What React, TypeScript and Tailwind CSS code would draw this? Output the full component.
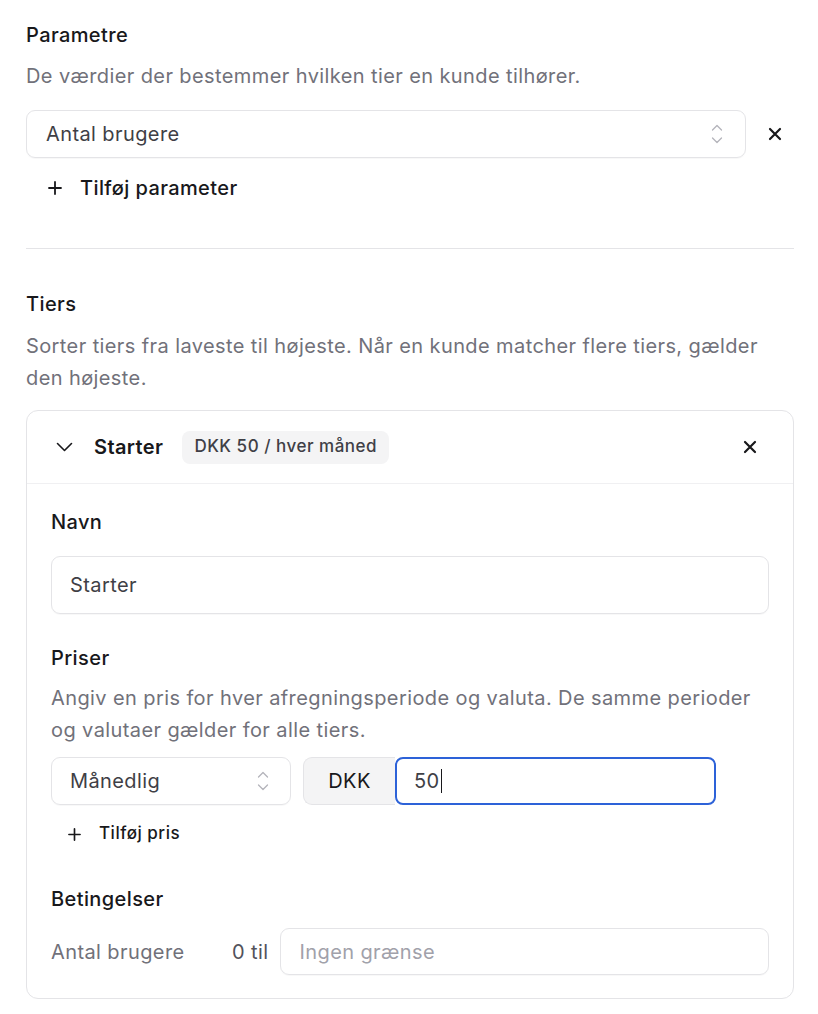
import React from "react";

function XIcon() {
  return (
    <svg width="14" height="14" viewBox="0 0 14 14" fill="none" stroke="#18181b" strokeWidth="2.2" strokeLinecap="round">
      <path d="M2 2L12 12M12 2L2 12" />
    </svg>
  );
}

function UpDown() {
  return (
    <svg width="14" height="22" viewBox="0 0 14 22" fill="none" stroke="#b4b4bb" strokeWidth="1.3" strokeLinecap="round" strokeLinejoin="round">
      <path d="M2.5 7L7 2.5L11.5 7" />
      <path d="M2.5 15L7 19.5L11.5 15" />
    </svg>
  );
}

function Plus({ size = 14 }: { size?: number }) {
  return (
    <svg width={size} height={size} viewBox="0 0 14 14" fill="none" stroke="#18181b" strokeWidth="1.8" strokeLinecap="round">
      <path d="M7 1V13M1 7H13" />
    </svg>
  );
}

function ChevronDown() {
  return (
    <svg width="17" height="10" viewBox="0 0 17 10" fill="none" stroke="#18181b" strokeWidth="1.6" strokeLinecap="round" strokeLinejoin="round">
      <path d="M1.5 1.5L8.5 8.5L15.5 1.5" />
    </svg>
  );
}

export default function App() {
  return (
    <div
      className="w-[818px] min-h-[1014px] bg-white px-[26px] pt-[21px] text-[20px] tracking-[0.02em] text-[#18181b]"
      style={{ fontFamily: "Inter, 'Noto Sans', sans-serif" }}
    >
      <div className="w-[768px]">
        <div className="font-medium leading-7">Parametre</div>
        <div className="mt-[13px] leading-7 text-[#71717a]">De værdier der bestemmer hvilken tier en kunde tilhører.</div>
        <div className="mt-[20px] flex items-center">
          <div className="flex h-12 w-[720px] items-center justify-between rounded-[9px] border border-[#e4e4e7] pl-[19px] pr-[21px] shadow-[0_1px_1px_rgba(0,0,0,0.03)]">
            <span className="text-[#3f3f46]">Antal brugere</span>
            <UpDown />
          </div>
          <div className="ml-[22px] flex h-12 items-center">
            <XIcon />
          </div>
        </div>
        <div className="mt-[10px] flex h-10 items-center gap-[18px] pl-[22px]">
          <Plus />
          <span className="font-medium">Tilføj parameter</span>
        </div>
        <div className="mt-[40px] h-px bg-[#e4e4e7]" />

        <div className="mt-[41px] font-medium leading-7">Tiers</div>
        <div className="mt-[12px] leading-8 text-[#71717a]">
          Sorter tiers fra laveste til højeste. Når en kunde matcher flere tiers, gælder den højeste.
        </div>

        <div className="mt-[16px] rounded-[12px] border border-[#e4e4e7]">
          <div className="flex h-[73px] items-center border-b border-[#f0f0f2] pl-[29px] pr-[36px]">
            <ChevronDown />
            <span className="ml-[21px] font-semibold">Starter</span>
            <span className="ml-[19px] flex h-[33px] items-center rounded-[8px] bg-[#f4f4f5] px-[12px] text-[17px] font-medium tracking-[0.03em] text-[#3f3f46]">
              DKK 50 / hver måned
            </span>
            <div className="ml-auto">
              <XIcon />
            </div>
          </div>

          <div className="px-[24px] pb-[23px] pt-[24px]">
            <div className="font-medium leading-7">Navn</div>
            <div className="mt-[20px] flex h-[58px] items-center rounded-[9px] border border-[#e4e4e7] px-[18px] text-[#3f3f46] shadow-[0_1px_1px_rgba(0,0,0,0.03)]">
              Starter
            </div>

            <div className="mt-[30px] font-medium leading-7">Priser</div>
            <div className="mt-[10px] leading-8 text-[#71717a]">
              Angiv en pris for hver afregningsperiode og valuta. De samme perioder og valutaer gælder for alle tiers.
            </div>
            <div className="mt-[11px] flex h-12 items-center">
              <div className="flex h-12 w-[240px] items-center justify-between rounded-[9px] border border-[#e4e4e7] pl-[18px] pr-[20px] shadow-[0_1px_1px_rgba(0,0,0,0.03)]">
                <span className="text-[#3f3f46]">Månedlig</span>
                <UpDown />
              </div>
              <div className="ml-[12px] flex h-12">
                <div className="flex w-[92px] items-center justify-center rounded-l-[9px] border border-r-0 border-[#e4e4e7] bg-[#f4f4f5] text-[#18181b]">
                  DKK
                </div>
                <div className="flex w-[321px] items-center rounded-[8px] border-2 border-[#2d62d8] px-[17px] text-[#3f3f46]">
                  50<span className="ml-px inline-block h-[24px] w-[1.5px] bg-[#18181b]" />
                </div>
              </div>
            </div>
            <div className="mt-[11px] flex h-9 items-center gap-[18px] pl-[17px]">
              <Plus size={13} />
              <span className="text-[17px] font-medium tracking-[0.03em]">Tilføj pris</span>
            </div>

            <div className="mt-[33px] font-medium leading-7">Betingelser</div>
            <div className="mt-[15px] flex h-[47px] items-center">
              <span className="w-[181px] text-[#71717a]">Antal brugere</span>
              <span className="text-[#52525b]">0 til</span>
              <div className="ml-[12px] flex h-[47px] flex-1 items-center rounded-[9px] border border-[#e4e4e7] px-[18px] text-[#a1a1aa] shadow-[0_1px_1px_rgba(0,0,0,0.03)]">
                Ingen grænse
              </div>
            </div>
          </div>
        </div>
      </div>
    </div>
  );
}
